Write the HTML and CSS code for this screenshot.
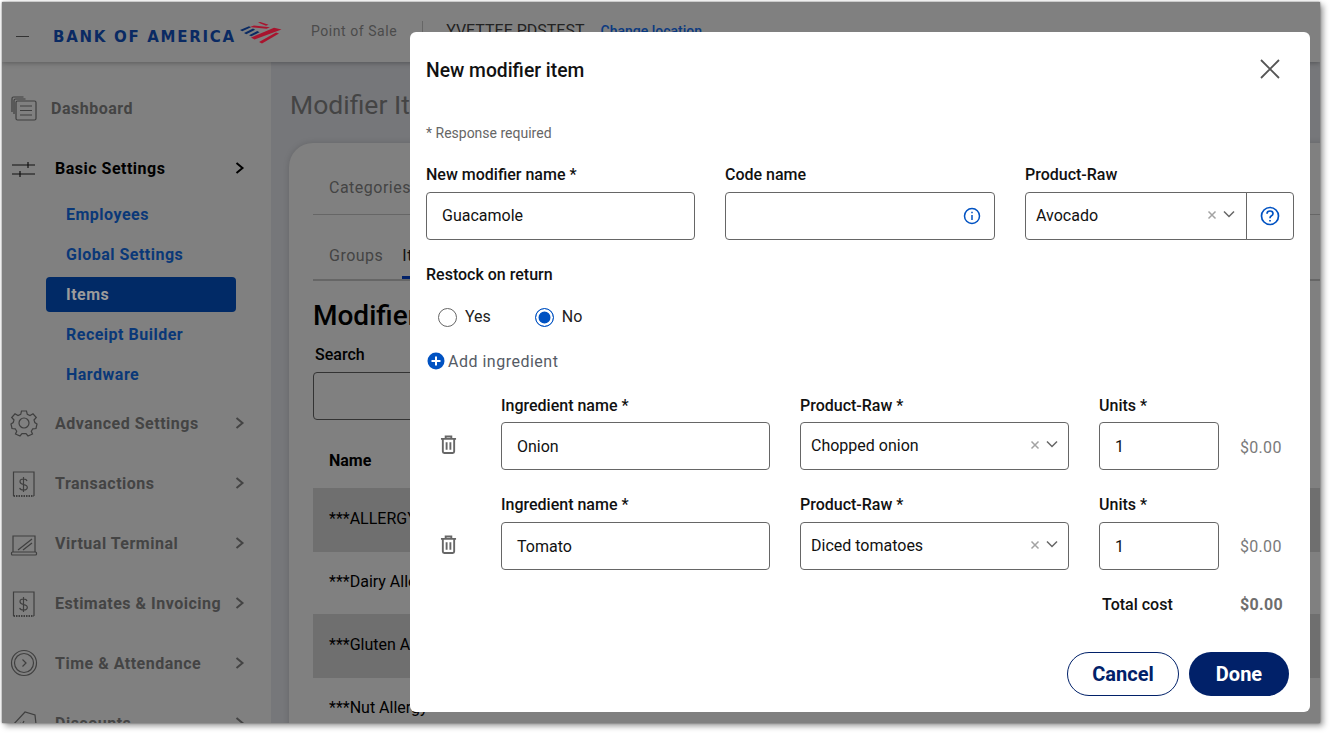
FILE: index.html
```html
<!DOCTYPE html>
<html lang="en">
<head>
<meta charset="utf-8">
<title>New modifier item</title>
<link rel="stylesheet" href="styles.css">
</head>
<body>
<div class="frame">
  <header class="topbar">
    <span class="menu-line"></span>
    <span class="logo-text">BANK OF AMERICA</span>
    <svg class="flag" viewBox="0 0 42 22" aria-hidden="true">
      <path fill="#0a2a63" d="M0 8 9 4.300 11 5.300 2.300 9.300ZM4 11 13 6.600 15.200 7.700 6.300 12.200ZM9 13.200 17.300 9 19.500 10.200 11.300 14.300Z"/>
      <path fill="#a8142e" d="M18 .6 20.300 0 28.500 2.800 26 3.700ZM10 5 14 3.400 30 5.200 26.500 6.800ZM11 15.500 34 5.800 41.500 7.500 14.500 17.500ZM19 20 36 10.500 39 11.500 22 21.500Z"/>
    </svg>
    <span class="product">Point of Sale</span>
    <span class="divider"></span>
    <span class="merchant">YVETTEE PDSTEST</span>
    <span class="change">Change location</span>
  </header>
  <div class="body-row">
    <nav class="sidebar">
      <div class="nav-row nav-dash">
        <svg class="nav-icon" viewBox="0 0 28 28" aria-hidden="true"><path d="M5 19V5.500Q5 4 6.500 4H16.500M3 17V3.500Q3 2 4.500 2H14.500" transform="translate(-1 1)"/><rect x="6" y="7" width="20" height="19" rx="1.500"/><path d="M10 12H22M10 16.500H22M10 21H22"/></svg>
        <span class="nav-label">Dashboard</span>
      </div>
      <div class="nav-row nav-open">
        <svg class="nav-icon" viewBox="0 0 28 28" aria-hidden="true"><path d="M2 11H25M2 20H25M18 8V14M10 17V23"/></svg>
        <span class="nav-label">Basic Settings</span>
        <svg class="chev" viewBox="0 0 10 12" aria-hidden="true"><path d="M1.500 1 7.500 6 1.500 11"/></svg>
      </div>
      <ul class="subnav">
        <li class="sub-item">Employees</li>
        <li class="sub-item">Global Settings</li>
        <li class="sub-item sub-active">Items</li>
        <li class="sub-item">Receipt Builder</li>
        <li class="sub-item">Hardware</li>
      </ul>
      <div class="nav-row">
        <svg class="nav-icon" viewBox="0 0 28 28" aria-hidden="true"><circle cx="14" cy="14" r="5"/><path d="M11.500 2H16.500L17.300 5.300 20 6.500 23 4.800 26.300 8.500 24 11 24.800 13.500 27 15 26 19.500 22.800 19.800 21.300 22.300 22.500 25 18 27 16 24.600H12L10 27 5.500 25 6.700 22.300 5.200 19.800 2 19.500 1 15 3.200 13.500 4 11 1.700 8.500 5 4.800 8 6.500 10.700 5.300Z"/></svg>
        <span class="nav-label">Advanced Settings</span>
        <svg class="chev" viewBox="0 0 10 12" aria-hidden="true"><path d="M1.500 1 7.500 6 1.500 11"/></svg>
      </div>
      <div class="nav-row">
        <svg class="nav-icon" viewBox="0 0 28 28" aria-hidden="true"><path d="M3.500 27V3H24V27"/><path class="dots" d="M3.500 27H24"/><path d="M17.500 10.500Q17 8.500 14 8.500 10.500 8.500 10.500 11 10.500 13.300 14 14 17.800 14.700 17.800 17 17.800 19.500 14 19.500 10.700 19.500 10.200 17.300M14 6.500V21.500" transform="translate(-.5 1.500)"/></svg>
        <span class="nav-label">Transactions</span>
        <svg class="chev" viewBox="0 0 10 12" aria-hidden="true"><path d="M1.500 1 7.500 6 1.500 11"/></svg>
      </div>
      <div class="nav-row">
        <svg class="nav-icon" viewBox="0 0 28 28" aria-hidden="true"><path d="M3 23V7H25V23"/><rect x="1.500" y="23" width="25" height="3" rx="1"/><path d="M8 21 22 10M13 21 22 14"/></svg>
        <span class="nav-label">Virtual Terminal</span>
        <svg class="chev" viewBox="0 0 10 12" aria-hidden="true"><path d="M1.500 1 7.500 6 1.500 11"/></svg>
      </div>
      <div class="nav-row">
        <svg class="nav-icon" viewBox="0 0 28 28" aria-hidden="true"><path d="M3.500 27V3H24V27"/><path class="dots" d="M3.500 27H24"/><path d="M17.500 10.500Q17 8.500 14 8.500 10.500 8.500 10.500 11 10.500 13.300 14 14 17.800 14.700 17.800 17 17.800 19.500 14 19.500 10.700 19.500 10.200 17.300M14 6.500V21.500" transform="translate(-.5 1.500)"/></svg>
        <span class="nav-label">Estimates &amp; Invoicing</span>
        <svg class="chev" viewBox="0 0 10 12" aria-hidden="true"><path d="M1.500 1 7.500 6 1.500 11"/></svg>
      </div>
      <div class="nav-row">
        <svg class="nav-icon" viewBox="0 0 28 28" aria-hidden="true"><circle cx="14" cy="14" r="12.500"/><circle cx="14" cy="14" r="9.500"/><path d="M12.500 10.500 16 14 12.500 17.500"/></svg>
        <span class="nav-label">Time &amp; Attendance</span>
        <svg class="chev" viewBox="0 0 10 12" aria-hidden="true"><path d="M1.500 1 7.500 6 1.500 11"/></svg>
      </div>
      <div class="nav-row">
        <svg class="nav-icon" viewBox="0 0 28 28" aria-hidden="true"><path d="M2 17 15 3 25 6 26 15 13 27ZM10 14 17 19M14 12 11 18"/></svg>
        <span class="nav-label">Discounts</span>
        <svg class="chev" viewBox="0 0 10 12" aria-hidden="true"><path d="M1.500 1 7.500 6 1.500 11"/></svg>
      </div>
    </nav>
    <main class="content">
      <h1 class="page-title">Modifier Items</h1>
      <section class="card">
        <div class="tabs tabs-top"><span class="tab">Categories</span></div>
        <div class="tabs tabs-second"><span class="tab">Groups</span><span class="tab tab-active">Items</span></div>
        <h2 class="card-title">Modifier</h2>
        <div class="search-label">Search</div>
        <div class="search-box"></div>
        <div class="table-head">Name</div>
        <div class="table-row row-shade">***ALLERGY</div>
        <div class="table-row">***Dairy Allergy</div>
        <div class="table-row row-shade">***Gluten Allergy</div>
        <div class="table-row">***Nut Allergy</div>
      </section>
    </main>
  </div>

  <div class="modal" role="dialog">
    <div class="modal-head">
      <h3 class="modal-title">New modifier item</h3>
      <svg class="close" viewBox="0 0 20 20" aria-hidden="true"><path d="M1 1 19 19M19 1 1 19"/></svg>
    </div>
    <p class="required">* Response required</p>
    <div class="fields">
      <div class="field">
        <div class="label">New modifier name *</div>
        <div class="input input-pad">Guacamole</div>
      </div>
      <div class="field">
        <div class="label">Code name</div>
        <div class="input input-pad input-icon">
          <svg class="info" viewBox="0 0 18 18" aria-hidden="true"><circle cx="9" cy="9" r="7.500"/><path d="M9 8V13M9 4.800V6.200"/></svg>
        </div>
      </div>
      <div class="field">
        <div class="label">Product-Raw</div>
        <div class="combo">
          <div class="input select joined">Avocado
            <span class="select-tools">
              <svg class="clear" viewBox="0 0 10 10" aria-hidden="true"><path d="M1.500 1.500 8.500 8.500M8.500 1.500 1.500 8.500"/></svg>
              <svg class="caret" viewBox="0 0 12 8" aria-hidden="true"><path d="M1 1.500 6 6.500 11 1.500"/></svg>
            </span>
          </div>
          <div class="help-box">
            <svg class="help" viewBox="0 0 20 20" aria-hidden="true"><circle cx="10" cy="10" r="8.500"/><path d="M7 7.800Q7 5 10 5 13 5 13 7.500 13 9 11.500 9.800 10 10.600 10 12.300M10 14V15.500"/></svg>
          </div>
        </div>
      </div>
    </div>
    <div class="label restock">Restock on return</div>
    <div class="radios">
      <span class="radio"><span class="dot"></span>Yes</span>
      <span class="radio"><span class="dot dot-on"></span>No</span>
    </div>
    <div class="add">
      <svg class="add-icon" viewBox="0 0 18 18" aria-hidden="true"><circle cx="9" cy="9" r="8.500"/><path d="M9 4.500V13.500M4.500 9H13.500"/></svg>
      <span>Add ingredient</span>
    </div>
    <div class="ingredient">
      <svg class="trash" viewBox="0 0 18 20" aria-hidden="true"><path d="M1 4H17M6 3V1.500H12V3M3 4V17.500Q3 19 4.500 19H13.500Q15 19 15 17.500V4M7 7.500V15.500M11 7.500V15.500"/></svg>
      <div class="field">
        <div class="label label-tight">Ingredient name *</div>
        <div class="input input-pad">Onion</div>
      </div>
      <div class="field">
        <div class="label label-tight">Product-Raw *</div>
        <div class="input select">Chopped onion
          <span class="select-tools">
            <svg class="clear" viewBox="0 0 10 10" aria-hidden="true"><path d="M1.500 1.500 8.500 8.500M8.500 1.500 1.500 8.500"/></svg>
            <svg class="caret" viewBox="0 0 12 8" aria-hidden="true"><path d="M1 1.500 6 6.500 11 1.500"/></svg>
          </span>
        </div>
      </div>
      <div class="field">
        <div class="label label-tight">Units *</div>
        <div class="input input-pad">1</div>
      </div>
      <div class="price">$0.00</div>
    </div>
    <div class="ingredient ingredient-next">
      <svg class="trash" viewBox="0 0 18 20" aria-hidden="true"><path d="M1 4H17M6 3V1.500H12V3M3 4V17.500Q3 19 4.500 19H13.500Q15 19 15 17.500V4M7 7.500V15.500M11 7.500V15.500"/></svg>
      <div class="field">
        <div class="label label-tight">Ingredient name *</div>
        <div class="input input-pad">Tomato</div>
      </div>
      <div class="field">
        <div class="label label-tight">Product-Raw *</div>
        <div class="input select">Diced tomatoes
          <span class="select-tools">
            <svg class="clear" viewBox="0 0 10 10" aria-hidden="true"><path d="M1.500 1.500 8.500 8.500M8.500 1.500 1.500 8.500"/></svg>
            <svg class="caret" viewBox="0 0 12 8" aria-hidden="true"><path d="M1 1.500 6 6.500 11 1.500"/></svg>
          </span>
        </div>
      </div>
      <div class="field">
        <div class="label label-tight">Units *</div>
        <div class="input input-pad">1</div>
      </div>
      <div class="price">$0.00</div>
    </div>
    <div class="total">
      <span class="total-label">Total cost</span>
      <span class="total-value">$0.00</span>
    </div>
    <div class="actions">
      <span class="btn btn-ghost">Cancel</span>
      <span class="btn btn-solid">Done</span>
    </div>
  </div>
</div>
</body>
</html>
```

FILE: styles.css
```css
* { box-sizing: border-box; }
html, body { margin: 0; padding: 0; background: #fff; overflow: hidden; }
body { width: 1333px; height: 737px; padding: 2px 0 0 2px; font-family: Roboto, "Liberation Sans", sans-serif; }
h1, h2, h3, p, ul { margin: 0; padding: 0; }
ul { list-style: none; }

.frame {
  position: relative;
  width: 1318px;
  height: 721px;
  background: #808080;
  overflow: clip;
  box-shadow: 3px 3px 6px rgba(0,0,0,.4), 0 0 2px rgba(0,0,0,.5);
}

.topbar {
  position: relative;
  z-index: 2;
  display: flex;
  align-items: center;
  height: 60px;
  background: #808080;
  box-shadow: 0 1px 5px rgba(0,0,0,.3);
}
.menu-line { width: 13px; height: 1px; margin: 9px 0 0 14px; background: #333; }
.logo-text {
  flex: none;
  margin: 10px 0 0 24px;
  width: 186px;
  font: 700 15px/20px "DejaVu Sans", sans-serif;
  letter-spacing: 1.700px;
  color: #0a2a63;
  white-space: nowrap;
}
.flag { width: 42px; height: 22px; margin: 2px 0 0 1px; flex: none; }
.product { margin: -2px 0 0 29px; font-size: 14px; letter-spacing: .55px; color: #4b4b4b; white-space: nowrap; }
.divider { width: 1px; height: 20px; margin: -2px 0 0 25px; background: #666; }
.merchant { margin: -3px 0 0 23px; font-size: 16px; color: #222; white-space: nowrap; }
.change { margin: -3px 0 0 16px; font-size: 14px; font-weight: 500; color: #0b3a80; white-space: nowrap; }

.body-row { display: flex; height: 661px; }
.sidebar { flex: none; width: 269px; padding-top: 16px; background: #808080; }
.nav-row {
  display: flex;
  align-items: center;
  height: 60px;
  padding: 0 26px 0 8px;
  color: #444;
}
.nav-icon { flex: none; width: 28px; height: 28px; margin-right: 17px; fill: none; stroke: #3f3f3f; stroke-width: 1.200; }
.nav-dash .nav-icon { margin-right: 13px; }
.dots { stroke-dasharray: 1.500 1; stroke-width: 2; }
.nav-label { flex: 1; font-size: 16px; font-weight: 700; letter-spacing: .5px; white-space: nowrap; }
.nav-open { height: 56px; padding-top: 4px; color: #000; }
.nav-open .nav-icon { stroke: #111; }
.chev { flex: none; width: 10px; height: 12px; fill: none; stroke: #444; stroke-width: 2; }
.nav-open .chev { stroke: #000; }
.subnav { margin-bottom: -1px; }
.sub-item {
  display: flex;
  align-items: center;
  height: 40px;
  margin-left: 44px;
  width: 190px;
  padding-left: 20px;
  font-size: 16px;
  font-weight: 700;
  letter-spacing: .5px;
  color: #0a3878;
}
.sub-active { height: 35px; margin: 3px 0 2px 44px; border-radius: 4px; background: #012a66; color: #9b9b9b; }

.content { flex: 1; min-width: 0; padding: 24px 0 0 19px; background: #76777a; }
.page-title { height: 36px; font: 400 26.500px/38px Roboto, sans-serif; color: #444; white-space: nowrap; }
.card { width: 1100px; height: 600px; margin: 21px 0 0 -1px; padding: 0 0 0 24px; border-radius: 24px 0 0 0; background: #808080; box-shadow: 0 0 6px rgba(0,0,0,.15); }
.tabs { display: flex; border-bottom: 1px solid #666; color: #444; font-size: 16px; letter-spacing: .5px; }
.tabs-top { height: 72px; padding: 35px 0 0 16px; }
.tabs-second { height: 66px; padding-top: 31px; padding-left: 16px; border-bottom-width: 2px; }
.tab { margin-right: 19px; }
.tab-active { color: #111; border-bottom: 3px solid #012169; }
.card-title { margin-top: 17px; height: 36px; font-size: 28px; line-height: 36px; font-weight: 500; color: #000; }
.search-label { margin: 11px 0 0 2px; height: 20px; font-size: 16px; line-height: 20px; font-weight: 500; color: #000; }
.search-box { width: 600px; height: 48px; margin-top: 7px; border: 1px solid #333; border-radius: 4px; }
.table-head { height: 68px; padding: 31px 0 0 16px; font-size: 16px; line-height: 20px; font-weight: 700; color: #000; }
.table-row { display: flex; align-items: center; height: 62px; padding: 0 0 4px 16px; font-size: 16px; color: #000; white-space: nowrap; }
.row-shade { height: 64px; background: #6f6f6f; }

.modal {
  position: absolute;
  left: 408px;
  top: 30px;
  z-index: 5;
  width: 900px;
  height: 680px;
  padding: 0 15px 0 16px;
  border-radius: 6px;
  background: #fff;
  color: #000;
}
.modal-head { display: flex; align-items: center; justify-content: space-between; height: 76px; padding-right: 15px; }
.modal-title { padding-top: 2px; font: 500 19.300px/24px Roboto, sans-serif; color: #111; }
.close { width: 20px; height: 20px; margin-top: -2px; fill: none; stroke: #555; stroke-width: 1.800; }
.required { margin-top: 15px; height: 20px; font-size: 14px; line-height: 20px; color: #666; }
.fields { display: grid; grid-template-columns: 269px 270px 269px; column-gap: 30px; margin-top: 21px; }
.label { height: 20px; font-size: 16px; line-height: 22px; font-weight: 500; color: #111; }
.field .label { margin-bottom: 8px; }
.field .label-tight { margin-bottom: 7px; }
.ingredient-next .label-tight { line-height: 20px; }
.input {
  display: flex;
  align-items: center;
  height: 48px;
  border: 1px solid #666;
  border-radius: 4px;
  background: #fff;
  font-size: 16px;
  color: #111;
}
.input-pad { padding-left: 15px; }
.fields .input-pad { padding-bottom: 2px; }
.fields .input-icon { justify-content: flex-end; padding: 0 13px 0 0; }
.select { justify-content: space-between; padding: 0 10px 2px 10px; }
.select-tools { display: flex; align-items: center; gap: 6px; margin-top: -2px; }
.combo { display: flex; }
.joined { flex: 1; border-radius: 4px 0 0 4px; min-width: 0; padding-right: 11px; }
.help-box { display: flex; align-items: center; justify-content: center; flex: none; width: 48px; height: 48px; margin-left: -1px; border: 1px solid #666; border-radius: 0 4px 4px 0; }
.info { width: 18px; height: 18px; fill: none; stroke: #0052c2; stroke-width: 1.500; }
.help { width: 20px; height: 20px; fill: none; stroke: #0052c2; stroke-width: 1.700; }
.clear { width: 10px; height: 10px; margin-top: 1px; fill: none; stroke: #a3a3a3; stroke-width: 1.500; }
.caret { width: 12px; height: 8px; margin-top: -1px; fill: none; stroke: #666; stroke-width: 1.500; }
.restock { margin-top: 24px; }
.radios { display: flex; gap: 44px; height: 24px; margin-top: 21px; padding-left: 12px; }
.radio { display: flex; align-items: center; gap: 8px; padding-bottom: 2px; font-size: 16px; color: #222; }
.dot { width: 19px; height: 19px; margin-top: 2px; border: 1.500px solid #666; border-radius: 50%; background: #fff; }
.dot-on { border-color: #0052c2; background: #0052c2; box-shadow: inset 0 0 0 2.500px #fff; }
.add { display: flex; align-items: center; height: 24px; margin-top: 20px; font-size: 16px; letter-spacing: .5px; color: #555b65; }
.add-icon { width: 18px; height: 18px; margin: 0 3px 0 1px; fill: #0052c2; }
.add-icon path { stroke: #fff; stroke-width: 2; }
.ingredient {
  display: grid;
  grid-template-columns: 45px 269px 269px 120px auto;
  column-gap: 30px;
  margin-top: 22px;
}
.ingredient-next { margin-top: 25px; }
.trash { justify-self: center; align-self: end; width: 17px; height: 19px; margin-bottom: 16px; fill: none; stroke: #666; stroke-width: 2; }
.price { align-self: end; margin: 0 0 12px -9px; font-size: 16px; line-height: 20px; letter-spacing: .3px; color: #7a7a7a; }
.ingredient-next .price { margin-bottom: 13px; }
.total { display: grid; grid-template-columns: 120px auto; column-gap: 21px; height: 20px; margin: 25px 0 0 673px; font-size: 16px; line-height: 20px; }
.total-label { padding-left: 3px; font-weight: 500; color: #111; }
.total-value { font-weight: 700; letter-spacing: .3px; color: #6e6e6e; }
.actions { display: flex; justify-content: flex-end; gap: 10px; margin-top: 37px; padding-right: 6px; }
.btn { display: flex; align-items: center; justify-content: center; height: 44px; border-radius: 22px; font-size: 20px; font-weight: 700; }
.btn-ghost { width: 112px; border: 1px solid #012169; color: #012169; }
.btn-solid { width: 100px; background: #012169; color: #fff; }
```
